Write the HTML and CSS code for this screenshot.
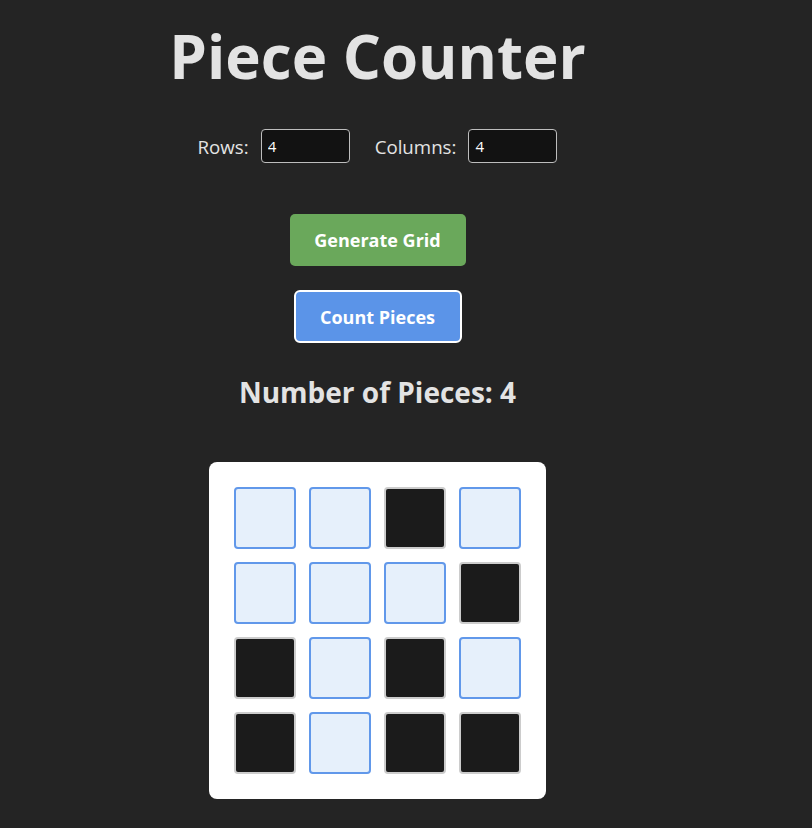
FILE: index.html
```html
<!DOCTYPE html>
<html>
<head>
<meta charset="utf-8">
<link rel="stylesheet" href="styles.css">
</head>
<body>
<main class="app">
  <h1 class="title">Piece Counter</h1>
  <div class="controls">
    <label class="field">Rows: <input class="num" type="number" value="4"></label>
    <label class="field">Columns: <input class="num" type="number" value="4"></label>
  </div>
  <button class="btn btn-generate">Generate Grid</button>
  <button class="btn btn-count">Count Pieces</button>
  <h2 class="result">Number of Pieces: 4</h2>
  <div class="board">
    <div class="cell light"></div><div class="cell light"></div><div class="cell dark"></div><div class="cell light"></div>
    <div class="cell light"></div><div class="cell light"></div><div class="cell light"></div><div class="cell dark"></div>
    <div class="cell dark"></div><div class="cell light"></div><div class="cell dark"></div><div class="cell light"></div>
    <div class="cell dark"></div><div class="cell light"></div><div class="cell dark"></div><div class="cell dark"></div>
  </div>
</main>
</body>
</html>
```
FILE: styles.css
```css
html, body {
  margin: 0;
  padding: 0;
  background: #242424;
}
body {
  font-family: "Open Sans", "Noto Sans", sans-serif;
  color: #e3e3e3;
}
.app {
  width: 755px;
  display: flex;
  flex-direction: column;
  align-items: center;
}
.title {
  margin: 14px 0 0;
  font-size: 60px;
  line-height: 84px;
  font-weight: 700;
  color: #e3e3e3;
}
.controls {
  margin-top: 31px;
  display: flex;
  gap: 25px;
}
.field {
  font-size: 18.7px;
  display: flex;
  align-items: center;
  gap: 12px;
}
.num {
  width: 89px;
  height: 34px;
  box-sizing: border-box;
  background: #121212;
  border: 1px solid #bdbdbd;
  border-radius: 4px;
  color: #fff;
  font-family: inherit;
  font-size: 15px;
  padding: 0 6px;
  -moz-appearance: textfield;
}
.num::-webkit-inner-spin-button, .num::-webkit-outer-spin-button {
  -webkit-appearance: none;
  margin: 0;
}
.btn {
  font-family: inherit;
  font-weight: 700;
  font-size: 18px;
  color: #fff;
  border-radius: 5px;
  cursor: pointer;
}
.btn-generate {
  margin-top: 51px;
  width: 176px;
  height: 52px;
  background: #6aa85b;
  border: none;
}
.btn-count {
  margin-top: 24px;
  width: 168px;
  height: 53px;
  background: #5b94e8;
  border: 2px solid #ffffff;
  border-radius: 6px;
}
.result {
  margin: 29px 0 0;
  font-size: 28px;
  font-weight: 700;
  line-height: 40px;
}
.board {
  margin-top: 50px;
  background: #ffffff;
  border-radius: 8px;
  padding: 25px;
  display: grid;
  grid-template-columns: repeat(4, 62px);
  grid-auto-rows: 62px;
  gap: 13px;
}
.cell {
  box-sizing: border-box;
  border-radius: 4px;
  border: 2px solid;
}
.light {
  background: #e6f0fb;
  border-color: #6198ea;
}
.dark {
  background: #1b1b1b;
  border-color: #cccccc;
}
```
